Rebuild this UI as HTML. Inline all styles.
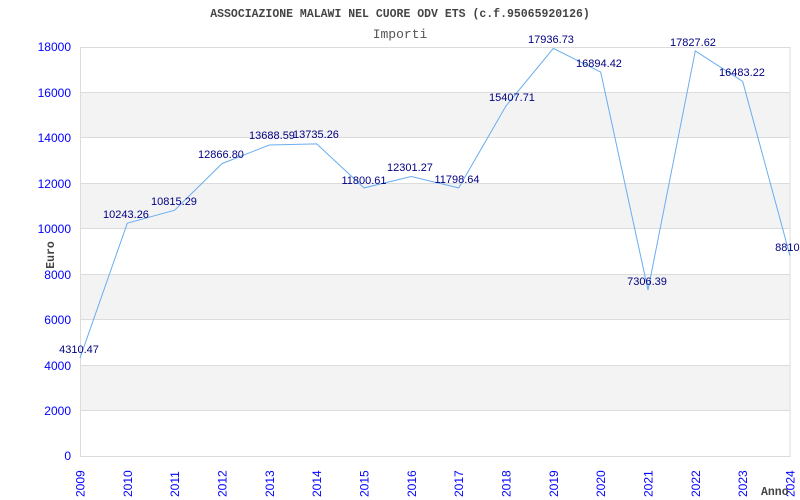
<!DOCTYPE html>
<html><head><meta charset="utf-8"><style>
html,body{margin:0;padding:0;background:#fff;}
svg{display:block;}
</style></head><body>
<svg width="800" height="500" xmlns="http://www.w3.org/2000/svg">
<rect width="800" height="500" fill="#fff"/>
<g fill="#f3f3f3">
<rect x="80" y="92.4" width="710" height="45.4"/>
<rect x="80" y="183.3" width="710" height="45.4"/>
<rect x="80" y="274.2" width="710" height="45.4"/>
<rect x="80" y="365.1" width="710" height="45.4"/>
</g>
<g stroke="#dcdcdc" stroke-width="1">
<line x1="80" y1="92.5" x2="790" y2="92.5"/>
<line x1="80" y1="137.5" x2="790" y2="137.5"/>
<line x1="80" y1="183.5" x2="790" y2="183.5"/>
<line x1="80" y1="228.5" x2="790" y2="228.5"/>
<line x1="80" y1="274.5" x2="790" y2="274.5"/>
<line x1="80" y1="319.5" x2="790" y2="319.5"/>
<line x1="80" y1="365.5" x2="790" y2="365.5"/>
<line x1="80" y1="410.5" x2="790" y2="410.5"/>
<rect x="80.5" y="47.5" width="709.5" height="409" fill="none"/>
</g>
<polyline fill="none" stroke="#6aaef0" stroke-width="1" points="80,358.1 127.3,223.2 174.7,210.2 222,163.6 269.3,145 316.7,143.9 364,187.9 411.3,176.5 458.7,187.9 506,105.9 553.3,48.4 600.7,72.1 648,290 695.3,50.9 742.7,81.5 790,255.8"/>
<g font-family="Liberation Sans, sans-serif" font-size="11" fill="#000080" text-anchor="middle">
<text x="79" y="353">4310.47</text>
<text x="126" y="218">10243.26</text>
<text x="174" y="205">10815.29</text>
<text x="221" y="158">12866.80</text>
<text x="272" y="139">13688.59</text>
<text x="316" y="138">13735.26</text>
<text x="364" y="184">11800.61</text>
<text x="410" y="171">12301.27</text>
<text x="457" y="183">11798.64</text>
<text x="512" y="101">15407.71</text>
<text x="551" y="43">17936.73</text>
<text x="599" y="67">16894.42</text>
<text x="647" y="285">7306.39</text>
<text x="693" y="46">17827.62</text>
<text x="742" y="76">16483.22</text>
<text x="792" y="251">8810.1</text>
</g>
<g font-family="Liberation Sans, sans-serif" font-size="12" fill="#0000ff" text-anchor="end">
<text x="71" y="51">18000</text>
<text x="71" y="97">16000</text>
<text x="71" y="142">14000</text>
<text x="71" y="188">12000</text>
<text x="71" y="233">10000</text>
<text x="71" y="279">8000</text>
<text x="71" y="324">6000</text>
<text x="71" y="370">4000</text>
<text x="71" y="415">2000</text>
<text x="71" y="460">0</text>
</g>
<g font-family="Liberation Sans, sans-serif" font-size="12" fill="#0000ff" text-anchor="start">
<text transform="translate(84.5,497) rotate(-90)">2009</text>
<text transform="translate(131.8,497) rotate(-90)">2010</text>
<text transform="translate(179.2,497) rotate(-90)">2011</text>
<text transform="translate(226.5,497) rotate(-90)">2012</text>
<text transform="translate(273.8,497) rotate(-90)">2013</text>
<text transform="translate(321.2,497) rotate(-90)">2014</text>
<text transform="translate(368.5,497) rotate(-90)">2015</text>
<text transform="translate(415.8,497) rotate(-90)">2016</text>
<text transform="translate(463.2,497) rotate(-90)">2017</text>
<text transform="translate(510.5,497) rotate(-90)">2018</text>
<text transform="translate(557.8,497) rotate(-90)">2019</text>
<text transform="translate(605.2,497) rotate(-90)">2020</text>
<text transform="translate(652.5,497) rotate(-90)">2021</text>
<text transform="translate(699.8,497) rotate(-90)">2022</text>
<text transform="translate(747.2,497) rotate(-90)">2023</text>
<text transform="translate(794.5,497) rotate(-90)">2024</text>
</g>
<g font-family="Liberation Mono, monospace" fill="#444">
<text x="400" y="17" font-size="11.5" font-weight="bold" text-anchor="middle">ASSOCIAZIONE MALAWI NEL CUORE ODV ETS (c.f.95065920126)</text>
<text x="400" y="38" font-size="13" text-anchor="middle" fill="#555">Importi</text>
<text transform="translate(54,255) rotate(-90)" font-size="11.5" font-weight="bold" text-anchor="middle">Euro</text>
<text x="761" y="495" font-size="11.5" font-weight="bold">Anno</text>
</g>
</svg>
</body></html>
